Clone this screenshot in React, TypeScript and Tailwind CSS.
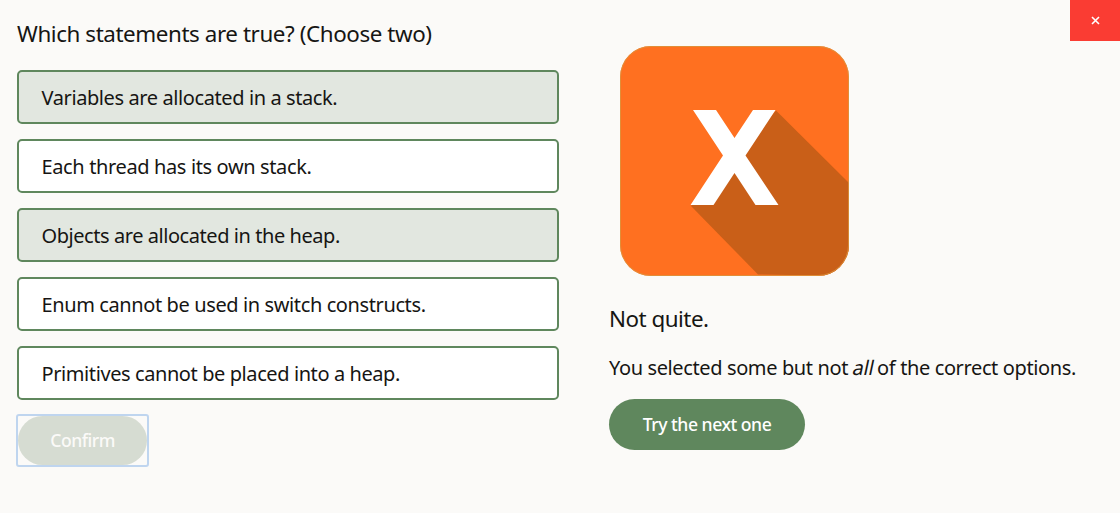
type Option = { text: string; selected: boolean; tracking: string };

const options: Option[] = [
  { text: "Variables are allocated in a stack.", selected: true, tracking: "tracking-[-0.4px]" },
  { text: "Each thread has its own stack.", selected: false, tracking: "tracking-[-0.37px]" },
  { text: "Objects are allocated in the heap.", selected: true, tracking: "tracking-[-0.44px]" },
  { text: "Enum cannot be used in switch constructs.", selected: false, tracking: "tracking-[-0.39px]" },
  { text: "Primitives cannot be placed into a heap.", selected: false, tracking: "tracking-[-0.41px]" },
];

function WrongIcon() {
  return (
    <svg width="229" height="230" viewBox="0 0 229 230" aria-hidden="true">
      <defs>
        <clipPath id="tile">
          <rect x="0" y="0" width="229" height="230" rx="31" />
        </clipPath>
      </defs>
      <rect x="0" y="0" width="229" height="230" rx="31" fill="#ff7020" />
      <path d="M156 64.5 L229 137 V230 L138 228.5 L71 160 Z" fill="#c95f18" clipPath="url(#tile)" />
      <path
        d="M73 64 H96 L114.5 92 L133 64 H155.500 L125.500 109.500 L158.500 159 H135.500 L114.500 127 L93.500 159 H70.500 L103 109.500 Z"
        fill="#ffffff"
      />
      <rect x="0.500" y="0.500" width="228" height="229" rx="30.500" fill="none" stroke="#d9963f" strokeOpacity="0.8" />
    </svg>
  );
}

export default function App() {
  return (
    <main className="flex h-[513px] w-[1120px] items-start bg-[#fbfaf8] font-['Noto_Sans',sans-serif] text-[#161513]">
      <section className="ml-[17px] w-[542px] shrink-0 pt-[18px]">
        <h1 className="h-[52px] whitespace-nowrap text-[22.4px] leading-[32px]">
          <span className="tracking-[-0.42px]">Which statements are true? (Choose two)</span>
        </h1>
        <ul className="flex flex-col gap-[15px]">
          {options.map((o) => (
            <li
              key={o.text}
              className={`flex h-[54px] items-center whitespace-nowrap rounded-[5px] border-2 border-[#5f875d] pl-[22.5px] pt-[2px] text-[20px] ${
                o.selected ? "bg-[#e2e7e0]" : "bg-white"
              }`}
            >
              <span className={o.tracking}>{o.text}</span>
            </li>
          ))}
        </ul>
        <button
          disabled
          className="mt-[14px] -ml-px flex h-[53px] w-[133px] rounded-[3px] border-2 border-[#bfd5ef]"
        >
          <span className="flex h-full w-full items-center justify-center rounded-full bg-[#d6dcd2] text-[17.6px] font-medium text-[#fbfaf8]">
            <span className="tracking-[-0.5px]">Confirm</span>
          </span>
        </button>
      </section>
      <section className="ml-[50px] flex w-[480px] flex-col items-start pt-[46px]">
        <div className="ml-[11px] h-[230px]">
          <WrongIcon />
        </div>
        <h2 className="mt-[27px] h-[32px] whitespace-nowrap text-[22.4px] leading-[32px]">
          <span className="tracking-[-0.5px]">Not quite.</span>
        </h2>
        <p className="mt-[18px] h-[30px] whitespace-nowrap text-[20px] leading-[30px]">
          <span className="tracking-[-0.38px]">
            You selected some but not <em className="inline-block -skew-x-12 not-italic -mr-[1.5px] tracking-[-0.2px]">all</em> of the correct options.
          </span>
        </p>
        <button className="mt-[16px] flex h-[51px] w-[196px] items-center justify-center rounded-full bg-[#5f875d] text-[17.6px] font-medium text-white">
          <span className="tracking-[-0.48px]">Try the next one</span>
        </button>
      </section>
      <button aria-label="Close" className="-ml-[19px] flex h-[41px] w-[50px] shrink-0 items-center justify-center bg-[#fa3c33]">
        <svg width="10" height="10" viewBox="0 0 10 10" fill="none" stroke="#fff" strokeWidth="1.6" aria-hidden="true">
          <path d="M2 1 L9 8 M9 1 L2 8" />
        </svg>
      </button>
    </main>
  );
}
